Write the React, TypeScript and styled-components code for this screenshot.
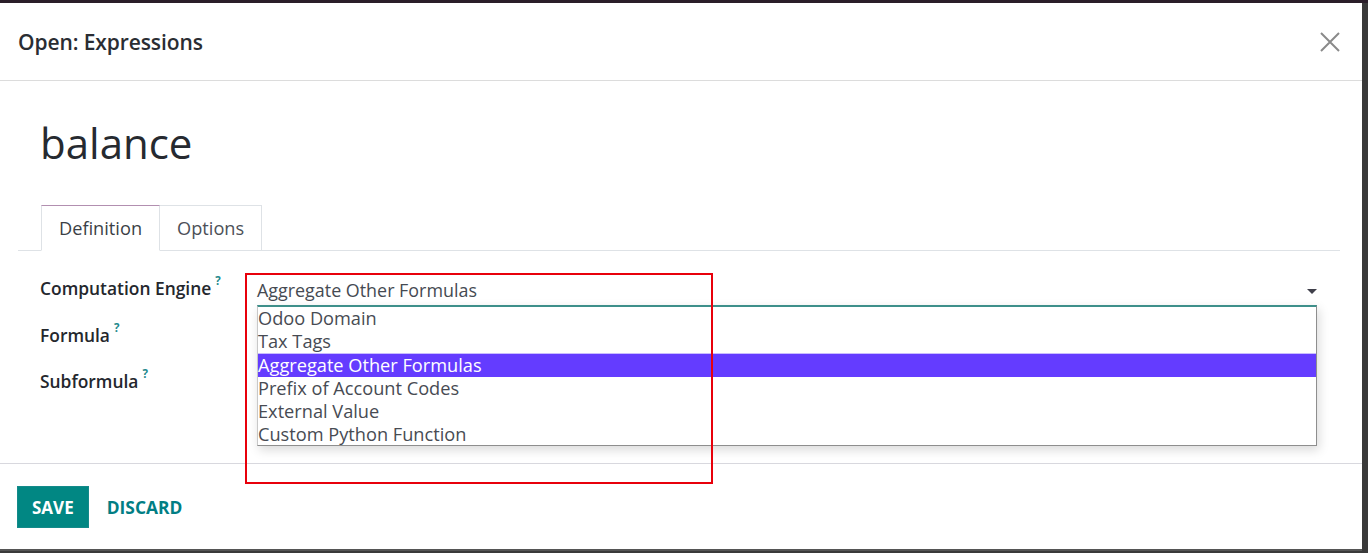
import React from 'react';
import styled, { createGlobalStyle } from 'styled-components';

const GlobalStyle = createGlobalStyle`
    html, body {
        margin: 0;
        padding: 0;
        height: 553px;
        overflow: hidden;
        background: #3a3a3a;
    }
    body {
        font-family: "Open Sans", "Noto Sans", sans-serif;
        color: #212529;
    }
`;

const Backdrop = styled.div`
    height: 553px;
    box-sizing: border-box;
    padding: 3px 6px 2px 0;
    background: linear-gradient(#2a1e29 0, #2a1e29 3px, #3a3a3a 3px);
    display: flex;
`;

const Modal = styled.div`
    flex: 1;
    background: #ffffff;
    display: flex;
    flex-direction: column;
    position: relative;
`;

const Header = styled.header`
    height: 78px;
    box-sizing: border-box;
    border-bottom: 1px solid #dcdcdc;
    display: flex;
    align-items: center;
    justify-content: space-between;
    padding: 0 20px 0 18px;
`;

const Title = styled.h4`
    margin: 0;
    font-size: 21px;
    font-weight: 600;
    color: #2a2d33;
    letter-spacing: -0.1px;
`;

const CloseButton = styled.button`
    border: none;
    background: none;
    padding: 0;
    width: 24px;
    height: 24px;
    display: flex;
    align-items: center;
    justify-content: center;
    cursor: pointer;
`;

const Body = styled.main`
    height: 383px;
    box-sizing: border-box;
    padding: 0 22px 0 18px;
    border-bottom: 1px solid #d8d8de;
`;

const RecordName = styled.h1`
    margin: 0;
    padding: 34px 0 0 22px;
    height: 124px;
    box-sizing: border-box;
    font-size: 42px;
    font-weight: 400;
    line-height: 56px;
    color: #262a30;
`;

const TabBar = styled.ul`
    list-style: none;
    margin: 0;
    padding: 0 0 0 23px;
    display: flex;
    border-bottom: 1px solid #dee2e6;
`;

const Tab = styled.li<{ $active?: boolean }>`
    height: 46px;
    box-sizing: border-box;
    margin-bottom: -1px;
    padding: 0 17px;
    display: flex;
    align-items: center;
    font-size: 18.2px;
    color: ${p => (p.$active ? '#3b3f46' : '#4c5058')};
    background: #fff;
    border: 1px solid #dee2e6;
    border-top-color: ${p => (p.$active ? '#b28fb0' : '#dee2e6')};
    border-bottom-color: ${p => (p.$active ? '#ffffff' : '#dee2e6')};
    border-left-width: ${p => (p.$active ? '1px' : '0')};
`;

const FormGrid = styled.div`
    display: grid;
    grid-template-columns: 217px 1fr;
    grid-auto-rows: 46.5px;
    padding: 23px 0 0 22px;
`;

const Label = styled.label`
    font-size: 17.4px;
    font-weight: 600;
    color: #24272d;
    display: flex;
    align-items: flex-start;
    padding-top: 2px;
`;

const Help = styled.sup`
    font-size: 11.5px;
    font-weight: 700;
    color: #1f8a8d;
    margin-left: 4px;
    line-height: 1;
    margin-top: -1px;
`;

const SelectField = styled.div`
    display: flex;
    align-items: flex-start;
    justify-content: space-between;
    padding: 4px 23px 0 0;
    font-size: 17.9px;
    color: #454a52;
`;

const Caret = styled.span`
    width: 0;
    height: 0;
    margin-top: 11px;
    border-left: 5px solid transparent;
    border-right: 5px solid transparent;
    border-top: 5px solid #3f3f4a;
`;

const ListBox = styled.ul`
    position: absolute;
    left: 257px;
    top: 302px;
    width: 1060px;
    height: 141px;
    box-sizing: border-box;
    margin: 0;
    padding: 0;
    list-style: none;
    background: #fff;
    border-top: 2px solid #3e8f8a;
    border-left: 1px solid #c8c8c8;
    border-right: 1px solid #8e8e8e;
    border-bottom: 1px solid #8e8e8e;
    box-shadow: 2px 4px 10px rgba(0, 0, 0, 0.15);
    z-index: 2;
`;

const Option = styled.li<{ $selected?: boolean }>`
    height: 23.2px;
    line-height: 23px;
    padding-left: 0;
    font-size: 18.2px;
    color: ${p => (p.$selected ? '#ffffff' : '#474b53')};
    background: ${p => (p.$selected ? '#643cff' : 'transparent')};
    border-top: ${p => (p.$selected ? '1px solid #c9bcff' : 'none')};
    box-sizing: border-box;
    white-space: nowrap;
`;

const Annotation = styled.div`
    position: absolute;
    left: 245px;
    top: 270px;
    width: 468px;
    height: 211px;
    box-sizing: border-box;
    border: 2px solid #e8000b;
    pointer-events: none;
    z-index: 3;
`;

const Footer = styled.footer`
    flex: 1;
    display: flex;
    align-items: flex-start;
    gap: 18px;
    padding: 22px 0 0 17px;
    border-bottom: 2px solid #555;
`;

const PrimaryButton = styled.button`
    height: 42px;
    padding: 0 14px;
    border: 1px solid #148a8a;
    background: #018783;
    color: #fff;
    font-family: inherit;
    font-size: 17px;
    font-weight: 700;
    cursor: pointer;
`;

const LinkButton = styled.button`
    height: 42px;
    padding: 0;
    border: none;
    background: none;
    color: #017e84;
    font-family: inherit;
    font-size: 17.4px;
    font-weight: 700;
    cursor: pointer;
`;

const engines = [
    'Odoo Domain',
    'Tax Tags',
    'Aggregate Other Formulas',
    'Prefix of Account Codes',
    'External Value',
    'Custom Python Function',
];

const App: React.FC = () => {
    const selected = 'Aggregate Other Formulas';

    return (
        <>
            <GlobalStyle />
            <Backdrop>
                <Modal>
                    <Header>
                        <Title>Open: Expressions</Title>
                        <CloseButton aria-label="Close">
                            <svg width="22" height="22" viewBox="0 0 22 22">
                                <path d="M2 2 L20 20 M20 2 L2 20" stroke="#8a8a8a" strokeWidth="2" />
                            </svg>
                        </CloseButton>
                    </Header>
                    <Body>
                        <RecordName>balance</RecordName>
                        <TabBar>
                            <Tab $active>Definition</Tab>
                            <Tab>Options</Tab>
                        </TabBar>
                        <FormGrid>
                            <Label>Computation Engine<Help>?</Help></Label>
                            <SelectField>
                                <span>{selected}</span>
                                <Caret />
                            </SelectField>
                            <Label>Formula<Help>?</Help></Label>
                            <div />
                            <Label>Subformula<Help>?</Help></Label>
                            <div />
                        </FormGrid>
                    </Body>
                    <Footer>
                        <PrimaryButton>SAVE</PrimaryButton>
                        <LinkButton>DISCARD</LinkButton>
                    </Footer>
                    <ListBox>
                        {engines.map(name => (
                            <Option key={name} $selected={name === selected}>{name}</Option>
                        ))}
                    </ListBox>
                    <Annotation />
                </Modal>
            </Backdrop>
        </>
    );
};

export default App;
